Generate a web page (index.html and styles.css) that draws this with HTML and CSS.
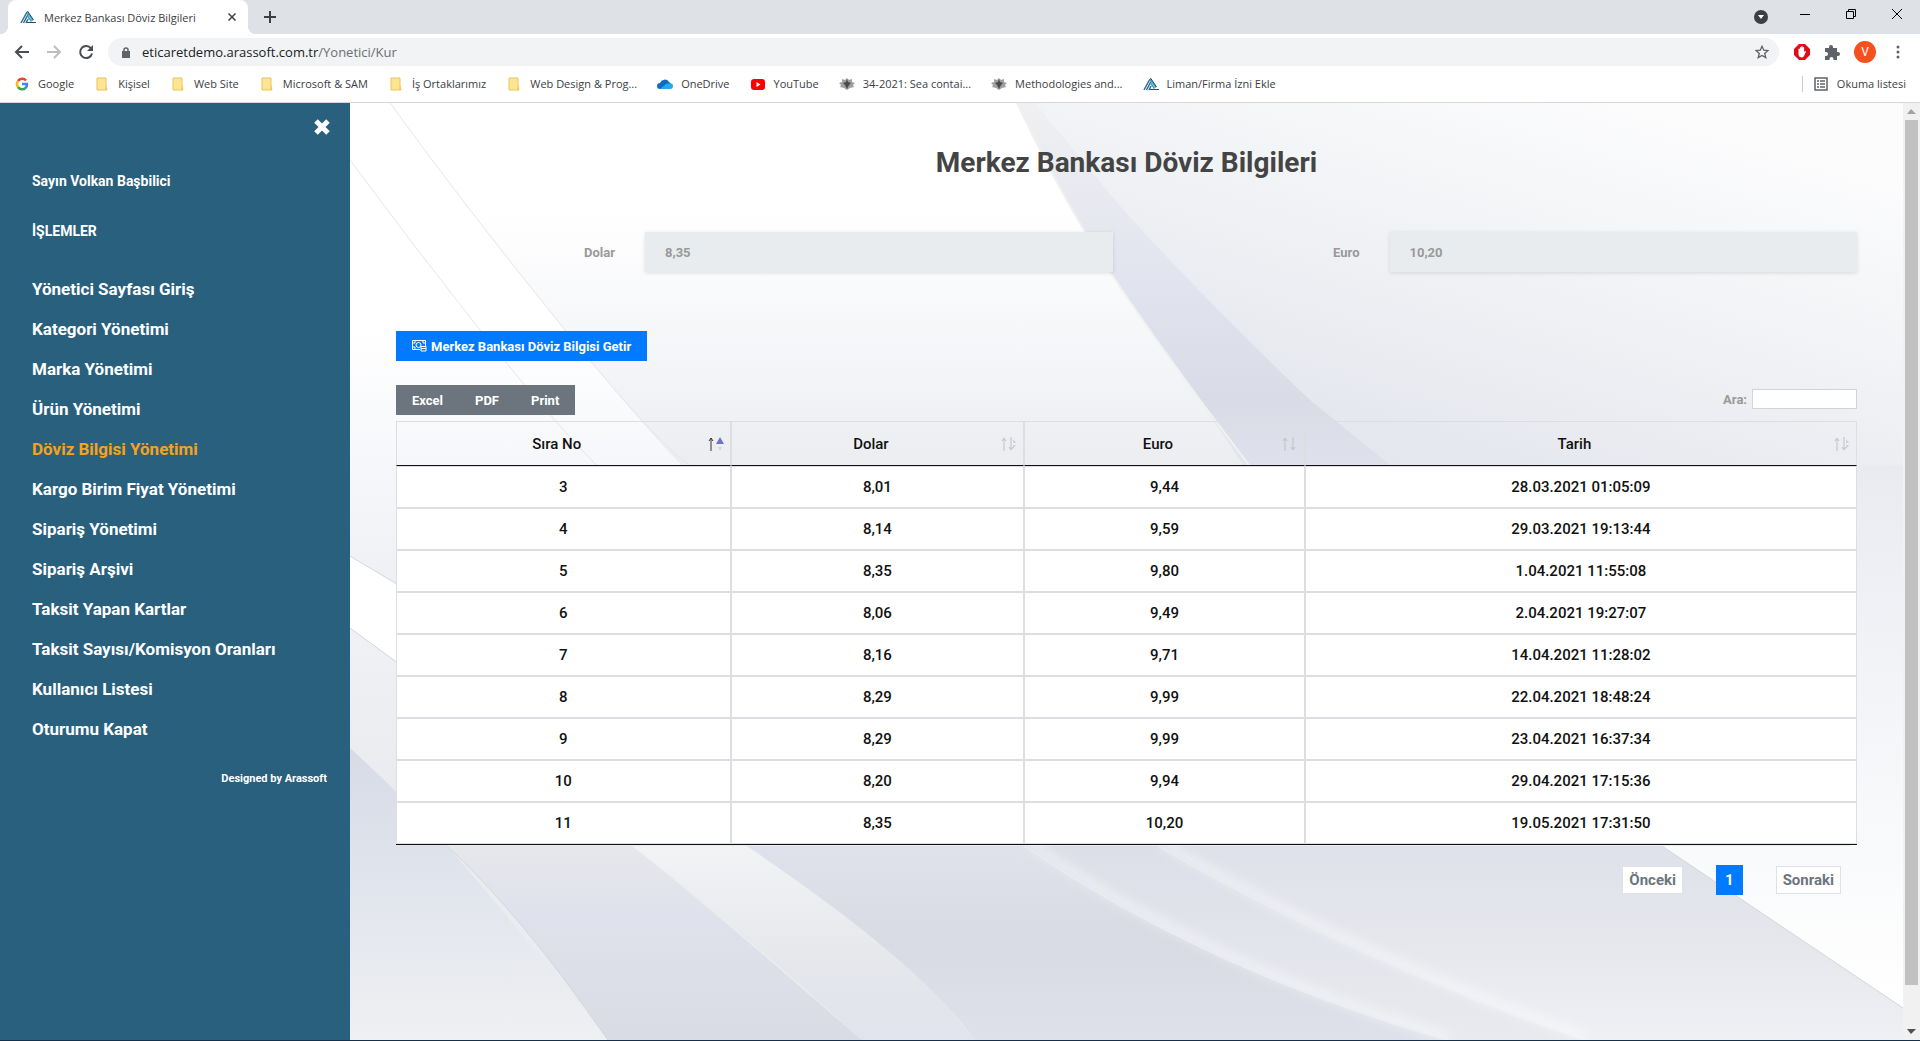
FILE: index.html
```html
<!DOCTYPE html>
<html lang="tr">
<head>
    <meta charset="UTF-8">
    <meta name="viewport" content="width=device-width, initial-scale=1.0">
    <title>Merkez Bankası Döviz Bilgileri</title>
    <link rel="stylesheet" href="styles.css">
</head>
<body>
    <!-- Shared icons -->
    <svg class="sprite" aria-hidden="true">
        <symbol id="logo" viewBox="0 0 16 16">
            <path d="M1 14L7 3M3.500 14L8 5.500M6 14l2-4" stroke="#2c6d94" stroke-width="1.500" fill="none"/>
            <path d="M7 3l6 8.500M7.500 7l4 5.500" stroke="#48a0bd" stroke-width="1.500" fill="none"/>
            <path d="M7.500 2l6 9M7 13.500h9" stroke="#1f4e72" fill="none"/>
        </symbol>
        <symbol id="folder" viewBox="0 0 16 16">
            <path d="M3 2h9v8l1 4H3z" fill="#ffe592" stroke="#e8c55c"/>
            <path d="M11 14l1-5 1 5z" fill="#f1ca4f"/>
        </symbol>
        <symbol id="leaf" viewBox="0 0 16 16">
            <path d="M8 2l2 2 3-1v3l3 1-2 2 1 2-4 1-3 2-3-2-4-1 1-2-2-2 3-1V3l3 1z" fill="#a0a0a0"/>
            <path d="M8 3l1 3 3 1-2 2-2 4-2-4-2-2 3-1z" fill="#4a4a4a"/>
        </symbol>
        <symbol id="sort" viewBox="0 0 18 16">
            <path d="M4 15V2M2 5l2-3 2 3M12 1v13M10 11l2 3 2-3" fill="none" stroke="#bfc1c8"/>
        </symbol>
        <symbol id="sort2" viewBox="0 0 18 16">
            <path d="M4 15V2M2 5l2-3 2 3M11 1v13M9 11l2 3 2-3" fill="none" stroke="#bfc1c8"/>
            <path d="M13 3l3 4h-3zM13 9h3l-3 4z" fill="#cfd1d6"/>
        </symbol>
    </svg>

    <header class="browser">
        <div class="tab-strip">
            <div class="tab">
                <svg class="icon"><use href="#logo"/></svg>
                <span class="tab-title">Merkez Bankası Döviz Bilgileri</span>
                <button class="plain" aria-label="Sekmeyi kapat">
                    <svg width="8" height="8"><path d="M.5.5l7 7M7.500.5l-7 7" stroke="#3c4043" stroke-width="1.500"/></svg>
                </button>
            </div>
            <button class="plain new-tab" aria-label="Yeni sekme">
                <svg width="12" height="12"><path d="M6 0v12M0 6h12" stroke="#3c4043" stroke-width="2"/></svg>
            </button>
            <div class="window-controls">
                <button class="plain search-tabs" aria-label="Sekme ara">
                    <svg width="14" height="14"><circle cx="7" cy="7" r="7" fill="#3c4043"/><path d="M4 5h6l-3 4z" fill="#fff"/></svg>
                </button>
                <button class="plain" aria-label="Küçült">
                    <svg width="10" height="10"><path d="M0 5.500h10" stroke="#000"/></svg>
                </button>
                <button class="plain" aria-label="Geri yükle">
                    <svg width="10" height="10"><path d="M.5 2.500h7v7h-7zM2.500 2V.5h7v7H8" fill="none" stroke="#000"/></svg>
                </button>
                <button class="plain" aria-label="Kapat">
                    <svg width="10" height="10"><path d="M0 0l10 10M10 0L0 10" stroke="#000"/></svg>
                </button>
            </div>
        </div>

        <div class="toolbar">
            <button class="plain" aria-label="Geri">
                <svg width="16" height="16"><path d="M15 8H2M8 2L2 8l6 6" fill="none" stroke="#4a4d51" stroke-width="2"/></svg>
            </button>
            <button class="plain" aria-label="İleri">
                <svg width="16" height="16"><path d="M1 8h13M8 2l6 6-6 6" fill="none" stroke="#bcbec1" stroke-width="2"/></svg>
            </button>
            <button class="plain" aria-label="Yenile">
                <svg width="16" height="16"><path d="M13 4.500A6 6 0 1 0 14 9.500" fill="none" stroke="#4a4d51" stroke-width="2"/><path d="M15 1v6H9z" fill="#4a4d51"/></svg>
            </button>
            <div class="address">
                <svg width="8" height="11"><path d="M0 4h8v7H0z" fill="#5f6368"/><path d="M2 4.500V3a2 2 0 0 1 4 0v1.500" fill="none" stroke="#5f6368" stroke-width="1.500"/></svg>
                <span class="url">eticaretdemo.arassoft.com.tr<span class="path">/Yonetici/Kur</span></span>
                <svg width="14" height="14" viewBox="0 0 16 16"><path d="M8 1.500l2 4.500 4.800.4-3.700 3.200 1.200 4.800L8 11.900l-4.300 2.500 1.200-4.800L1.200 6.400 6 6z" fill="none" stroke="#5f6368" stroke-width="1.500"/></svg>
            </div>
            <div class="extensions">
                <svg width="16" height="16"><path d="M5 0h6l5 5v6l-5 5H5l-5-5V5z" fill="#e10c17"/><path d="M4.500 7.500V5q.7-1 1.400 0V3.500q.7-1 1.400 0v-1q.7-1 1.400 0v1q.7-1 1.400 0V8l1-1q1-.2.9.6L10 12q-1 1.500-2.500 1.500Q4.500 13 4.500 10z" fill="#fff"/></svg>
                <svg width="16" height="16"><path d="M1 4h4V3a2 2 0 0 1 4 0v1h4v4h1a2 2 0 0 1 0 4h-1v4H9.500v-1a2 2 0 0 0-4 0v1H1v-4h1a2 2 0 0 0 0-4H1z" fill="#5f6368"/></svg>
                <button class="avatar">V</button>
                <svg width="16" height="16" fill="#5f6368"><circle cx="8" cy="3" r="1.500"/><circle cx="8" cy="8" r="1.500"/><circle cx="8" cy="13" r="1.500"/></svg>
            </div>
        </div>

        <nav class="bookmarks">
            <a href="#"><svg class="icon" viewBox="0 0 16 16" fill="none" stroke-width="2.500"><path d="M12 4.500A5 5 0 0 0 4 5" stroke="#ea4335"/><path d="M4 5a5 5 0 0 0 0 6" stroke="#fbbc05"/><path d="M4 11a5 5 0 0 0 7.500 1" stroke="#34a853"/><path d="M11.500 12A5 5 0 0 0 13 8H8" stroke="#4285f4"/></svg>Google</a>
            <a href="#"><svg class="icon"><use href="#folder"/></svg>Kişisel</a>
            <a href="#"><svg class="icon"><use href="#folder"/></svg>Web Site</a>
            <a href="#"><svg class="icon"><use href="#folder"/></svg>Microsoft &amp; SAM</a>
            <a href="#"><svg class="icon"><use href="#folder"/></svg>İş Ortaklarımız</a>
            <a href="#"><svg class="icon"><use href="#folder"/></svg>Web Design &amp; Prog...</a>
            <a href="#"><svg class="icon" viewBox="0 0 16 16"><path d="M3 13a3 3 0 0 1 0-6 5 5 0 0 1 9-1 4 4 0 0 1 1 7z" fill="#0f6cbd"/><path d="M3 13l6-5q7-2 7 2 0 3-3 3z" fill="#28a8ea"/></svg>OneDrive</a>
            <a href="#"><svg class="icon" viewBox="0 0 16 16"><rect x="1" y="3" width="14" height="11" rx="3" fill="#f00"/><path d="M6.500 6v5l4-2.500z" fill="#fff"/></svg>YouTube</a>
            <a href="#"><svg class="icon"><use href="#leaf"/></svg>34-2021: Sea contai...</a>
            <a href="#"><svg class="icon"><use href="#leaf"/></svg>Methodologies and...</a>
            <a href="#"><svg class="icon"><use href="#logo"/></svg>Liman/Firma İzni Ekle</a>
            <a href="#" class="reading-list"><svg class="icon" viewBox="0 0 16 16" fill="none" stroke="#5f6368" stroke-width="1.500"><path d="M2 2h12v12H2z"/><path d="M4 5h2M7 5h5M4 8h2M7 8h5M4 11h2M7 11h5"/></svg>Okuma listesi</a>
        </nav>
    </header>

    <div class="page">
        <aside class="sidebar">
            <button class="plain close" aria-label="Menüyü kapat">
                <svg width="16" height="16"><path d="M2 2l12 12M14 2L2 14" stroke="#fff" stroke-width="5"/></svg>
            </button>
            <p class="side-text">Sayın Volkan Başbilici</p>
            <p class="side-text">İŞLEMLER</p>
            <ul>
                <li><a href="#">Yönetici Sayfası Giriş</a></li>
                <li><a href="#">Kategori Yönetimi</a></li>
                <li><a href="#">Marka Yönetimi</a></li>
                <li><a href="#">Ürün Yönetimi</a></li>
                <li><a href="#" class="active">Döviz Bilgisi Yönetimi</a></li>
                <li><a href="#">Kargo Birim Fiyat Yönetimi</a></li>
                <li><a href="#">Sipariş Yönetimi</a></li>
                <li><a href="#">Sipariş Arşivi</a></li>
                <li><a href="#">Taksit Yapan Kartlar</a></li>
                <li><a href="#">Taksit Sayısı/Komisyon Oranları</a></li>
                <li><a href="#">Kullanıcı Listesi</a></li>
                <li><a href="#">Oturumu Kapat</a></li>
            </ul>
            <p class="credit">Designed by Arassoft</p>
        </aside>

        <main class="content">
            <!-- Ribbon backdrop -->
            <svg class="backdrop" viewBox="0 0 1553 937" preserveAspectRatio="none" aria-hidden="true">
                <defs>
                    <linearGradient id="base" x1="0" y1="0" x2="0" y2="1"><stop offset="0" stop-color="#fff"/><stop offset=".11" stop-color="#fff"/><stop offset=".28" stop-color="#f4f5f8"/><stop offset=".4" stop-color="#ebecf0"/><stop offset=".7" stop-color="#eaecf0"/></linearGradient>
                    <linearGradient id="left" x1="0" y1="0" x2="0" y2="1"><stop offset="0" stop-color="#fff"/><stop offset=".4" stop-color="#fff"/><stop offset=".65" stop-color="#f6f7fa"/><stop offset="1" stop-color="#ebecf0"/></linearGradient>
                    <linearGradient id="right" x1="0" y1="1" x2=".7" y2="0"><stop offset="0" stop-color="#dfe3ee"/><stop offset=".3" stop-color="#e6e8ef"/><stop offset=".6" stop-color="#eff1f4"/><stop offset="1" stop-color="#fcfcfd"/></linearGradient>
                    <linearGradient id="fold" x1="0" y1="0" x2="0" y2="1"><stop offset="0" stop-color="#f0f0f1"/><stop offset=".45" stop-color="#e2e4ef"/><stop offset=".8" stop-color="#d9dce6"/><stop offset="1" stop-color="#dfe2ec"/></linearGradient>
                    <linearGradient id="margin" x1="0" y1="0" x2="0" y2="1"><stop offset="0" stop-color="#f0f1f5"/><stop offset="1" stop-color="#e9eaee"/></linearGradient>
                    <linearGradient id="b1" x1="0" y1="0" x2="0" y2="1"><stop offset="0" stop-color="#d8dbe6"/><stop offset=".4" stop-color="#dfe3ec"/><stop offset="1" stop-color="#eff0f2"/></linearGradient>
                    <linearGradient id="b2" x1="0" y1="0" x2="0" y2="1"><stop offset="0" stop-color="#e6e7ea"/><stop offset=".35" stop-color="#dfe2ec"/><stop offset="1" stop-color="#d9dce4"/></linearGradient>
                    <linearGradient id="b3" x1="0" y1="0" x2="0" y2="1"><stop offset="0" stop-color="#f1f3f5"/><stop offset=".6" stop-color="#e5e7eb"/><stop offset="1" stop-color="#e1e3ee"/></linearGradient>
                    <linearGradient id="b4" x1="0" y1="0" x2="0" y2="1"><stop offset="0" stop-color="#dfe1ec"/><stop offset=".5" stop-color="#d8dbe3"/><stop offset="1" stop-color="#dee1ea"/></linearGradient>
                    <linearGradient id="b5" x1="0" y1="0" x2="0" y2="1"><stop offset="0" stop-color="#dcdfe9"/><stop offset="1" stop-color="#e9eaee"/></linearGradient>
                    <linearGradient id="b6" x1="0" y1="0" x2="0" y2="1"><stop offset="0" stop-color="#dfe1eb"/><stop offset=".5" stop-color="#e6e7ec"/><stop offset="1" stop-color="#eff0f4"/></linearGradient>
                    <linearGradient id="b7" x1="0" y1="0" x2="0" y2="1"><stop offset="0" stop-color="#e9ebf1"/><stop offset=".6" stop-color="#f7f8fa"/><stop offset="1" stop-color="#fff"/></linearGradient>
                    <filter id="soft"><feGaussianBlur stdDeviation="5"/></filter>
                </defs>
                <path d="M0 0h1553v937H0z" fill="url(#base)"/>
                <path d="M0 0h40Q120 110 215 227T340 370L420 560H0z" fill="url(#left)"/>
                <path d="M0 57Q65 145 130 227T246 362M40 0Q120 110 215 227T340 362" fill="none" stroke="#e6e6e8"/>
                <path d="M667 0Q700 70 735 129T850 297L905 380h648V0z" fill="url(#right)"/>
                <path d="M667 0Q700 70 735 129T850 297L905 370h145L960 297C900 240 800 140 755 85L685 0z" fill="url(#fold)"/>
                <path d="M667 0Q700 70 735 129T850 297L905 370" fill="none" stroke="#f1f1ef" stroke-width="2"/>
                <!-- left margin of the table -->
                <path d="M0 453l60 36v80L0 525z" fill="#fff"/>
                <path d="M0 525l60 44v150H0z" fill="url(#margin)"/>
                <!-- lower ribbons -->
                <path d="M0 645Q50 690 97 743T258 937H0z" fill="url(#b1)"/>
                <path d="M97 743H282Q350 797 440 875L512 937H258Q170 810 97 743z" fill="url(#b2)"/>
                <path d="M282 743H397Q530 835 590 895L625 937H512Q360 800 282 743z" fill="url(#b3)"/>
                <path d="M397 743H675Q850 865 1095 937H625Q570 860 397 743z" fill="url(#b4)"/>
                <path d="M675 743H808Q1010 860 1230 937H1095Q850 865 675 743z" fill="url(#b5)"/>
                <path d="M808 743H1312L1553 905V937H1230Q1010 860 808 743z" fill="url(#b6)"/>
                <path d="M1500 362h53V905L1312 743h188z" fill="url(#b7)"/>
                <path d="M680 741Q853 861 1100 935M813 741Q1013 856 1235 933" fill="none" stroke="#fff" stroke-width="10" opacity=".4" filter="url(#soft)"/>
                <path d="M675 743Q850 865 1095 937M808 743Q1010 860 1230 937" fill="none" stroke="#eceef1"/>
                <path d="M97 743Q170 810 258 937M0 525l60 44M0 453l60 36M1312 743l241 162" fill="none" stroke="#d3d6dc"/>
            </svg>

            <h1>Merkez Bankası Döviz Bilgileri</h1>

            <form class="rates">
                <div class="field">
                    <label for="dolar">Dolar</label>
                    <input type="text" id="dolar" value="8,35" readonly>
                </div>
                <div class="field">
                    <label for="euro">Euro</label>
                    <input type="text" id="euro" value="10,20" readonly>
                </div>
            </form>

            <button class="btn btn-primary">
                <svg width="15" height="12" fill="none" stroke="#fff"><path d="M8 9.500H.5v-9h13V6M2 4V2h2M10 2h2v2M2 6v2h2"/><circle cx="6.500" cy="5" r="2.500"/><path d="M9 6.500h5v4.500H9zM9 8.500h5"/></svg>
                Merkez Bankası Döviz Bilgisi Getir
            </button>

            <div class="table-tools">
                <div class="btn-group">
                    <button class="btn">Excel</button>
                    <button class="btn">PDF</button>
                    <button class="btn">Print</button>
                </div>
                <div class="search">
                    <label for="ara">Ara:</label>
                    <input type="search" id="ara">
                </div>
            </div>

            <table>
                <thead>
                    <tr>
                        <th class="col-no"><div class="th"><span>Sıra No</span><svg width="18" height="16"><path d="M4 15V2M2 5l2-3 2 3" fill="none" stroke="#333"/><path d="M9 8l4-7 4 7z" fill="#6f73cf"/><path d="M11 11h4l-2 4z" fill="#d3d4dc"/></svg></div></th>
                        <th class="col-dolar"><div class="th"><span>Dolar</span><svg width="18" height="16"><use href="#sort2"/></svg></div></th>
                        <th class="col-euro"><div class="th"><span>Euro</span><svg width="18" height="16"><use href="#sort"/></svg></div></th>
                        <th><div class="th"><span>Tarih</span><svg width="18" height="16"><use href="#sort2"/></svg></div></th>
                    </tr>
                </thead>
                <tbody>
                    <tr><td>3</td><td>8,01</td><td>9,44</td><td>28.03.2021 01:05:09</td></tr>
                    <tr><td>4</td><td>8,14</td><td>9,59</td><td>29.03.2021 19:13:44</td></tr>
                    <tr><td>5</td><td>8,35</td><td>9,80</td><td>1.04.2021 11:55:08</td></tr>
                    <tr><td>6</td><td>8,06</td><td>9,49</td><td>2.04.2021 19:27:07</td></tr>
                    <tr><td>7</td><td>8,16</td><td>9,71</td><td>14.04.2021 11:28:02</td></tr>
                    <tr><td>8</td><td>8,29</td><td>9,99</td><td>22.04.2021 18:48:24</td></tr>
                    <tr><td>9</td><td>8,29</td><td>9,99</td><td>23.04.2021 16:37:34</td></tr>
                    <tr><td>10</td><td>8,20</td><td>9,94</td><td>29.04.2021 17:15:36</td></tr>
                    <tr><td>11</td><td>8,35</td><td>10,20</td><td>19.05.2021 17:31:50</td></tr>
                </tbody>
            </table>

            <nav class="pagination">
                <a href="#">Önceki</a>
                <a href="#" class="current">1</a>
                <a href="#">Sonraki</a>
            </nav>
        </main>

        <div class="scrollbar">
            <svg width="9" height="5"><path d="M0 5l4-5 5 5z" fill="#a3a3a3"/></svg>
            <div class="thumb"></div>
            <svg width="9" height="5"><path d="M0 0h9L4 5z" fill="#505050"/></svg>
        </div>
    </div>
</body>
</html>
```

FILE: styles.css
```css
* {
    box-sizing: border-box;
}
body {
    margin: 0;
    height: 100vh;
    display: flex;
    flex-direction: column;
    overflow: hidden;
    font-family: Roboto, "Open Sans", sans-serif;
    font-weight: 700;
}
a {
    color: inherit;
    text-decoration: none;
}
svg {
    display: block;
    flex: none;
}
.sprite {
    position: absolute;
    width: 0;
    height: 0;
}
.icon {
    width: 16px;
    height: 16px;
}
.plain {
    padding: 0;
    border: none;
    background: none;
}

/* Browser frame */
.browser {
    font-family: "Open Sans", "Noto Sans", sans-serif;
    font-size: 12px;
    font-weight: 400;
    color: #3c4043;
    border-bottom: 1px solid #d5d8db;
}
.tab-strip {
    display: flex;
    align-items: center;
    height: 34px;
    padding-left: 8px;
    background-color: #dee1e6;
}
.tab {
    position: relative;
    display: flex;
    align-items: center;
    gap: 8px;
    width: 240px;
    height: 34px;
    padding: 0 12px;
    border-radius: 8px 8px 0 0;
    background-color: #fff;
}
.tab::before, .tab::after {
    content: "";
    position: absolute;
    bottom: 0;
    width: 8px;
    height: 8px;
}
.tab::before {
    left: -8px;
    background: radial-gradient(circle at 0 0, #dee1e6 8px, #fff 8px);
}
.tab::after {
    right: -8px;
    background: radial-gradient(circle at 100% 0, #dee1e6 8px, #fff 8px);
}
.tab-title {
    flex: 1;
    font-size: 11px;
    white-space: nowrap;
}
.new-tab {
    margin-left: 16px;
}
.window-controls {
    display: flex;
    align-items: center;
    gap: 36px;
    height: 28px;
    margin: 0 0 6px auto;
    padding-right: 18px;
}
.search-tabs {
    margin: 6px -4px 0 0;
}
.toolbar {
    display: flex;
    align-items: center;
    gap: 16px;
    height: 36px;
    padding: 0 14px;
}
.address {
    flex: 1;
    display: flex;
    align-items: center;
    gap: 12px;
    height: 28px;
    margin: 0 -1px 0 -2px;
    padding: 0 10px 0 14px;
    border-radius: 14px;
    background-color: #f1f3f4;
}
.url {
    flex: 1;
    font-size: 13px;
    color: #202124;
}
.path {
    color: #6b6f73;
}
.extensions {
    display: flex;
    align-items: center;
    gap: 14px;
}
.avatar {
    width: 22px;
    height: 22px;
    padding: 0;
    border: none;
    border-radius: 50%;
    background-color: #f4511e;
    color: #fff;
    font: 12px Roboto, sans-serif;
}
.bookmarks {
    display: flex;
    align-items: center;
    gap: 20px;
    height: 32px;
    padding: 0 14px 5px;
    font-size: 11px;
}
.bookmarks a {
    display: flex;
    align-items: center;
    gap: 8px;
    white-space: nowrap;
}
.bookmarks .reading-list {
    margin-left: auto;
    padding-left: 10px;
    border-left: 1px solid #c8cacd;
}

/* Page */
.page {
    flex: 1;
    display: flex;
    min-height: 0;
    border-bottom: 1px solid #14304a;
}
.sidebar {
    flex: none;
    width: 350px;
    padding: 16px 20px 0 32px;
    background-color: #28607d;
    color: #fff;
    font-size: 14px;
}
.close {
    display: block;
    margin: 0 0 36px auto;
}
.side-text {
    margin: 0 0 30px;
    line-height: 20px;
}
.sidebar ul {
    margin: -2px 0 0;
    padding: 0;
    list-style: none;
    font-size: 17px;
    line-height: 40px;
}
.sidebar .active {
    color: #f5a31c;
}
.credit {
    margin: 20px 0 0;
    padding-right: 3px;
    font-size: 11px;
    line-height: 20px;
    text-align: right;
}
.content {
    position: relative;
    z-index: 0;
    flex: 1;
    padding: 40px 46px 0;
}
.backdrop {
    position: absolute;
    inset: 0;
    z-index: -1;
    width: 100%;
    height: 100%;
}
h1 {
    margin: 0 0 49px;
    font-size: 28px;
    line-height: 40px;
    text-align: center;
    color: #444;
}
.rates {
    display: grid;
    grid-template-columns: 1fr 1fr;
    gap: 28px;
    margin-bottom: 59px;
    font-size: 13px;
    color: #999;
}
.field {
    display: flex;
    align-items: center;
    gap: 30px;
}
.field label {
    width: 219px;
    text-align: right;
}
.field input {
    flex: 1;
    min-width: 0;
    height: 40px;
    padding: 0 20px;
    border: none;
    background-color: #e9ecef;
    box-shadow: 0 1px 4px rgba(0, 0, 0, 0.12);
    color: #999;
    font: inherit;
}
.btn {
    display: flex;
    align-items: center;
    gap: 4px;
    height: 30px;
    padding: 0 16px;
    border: none;
    background-color: #6c757d;
    color: #fff;
    font: inherit;
    font-size: 13px;
}
.btn-primary {
    background-color: #007bff;
}
.table-tools {
    display: flex;
    justify-content: space-between;
    margin: 24px 0 6px;
}
.btn-group {
    display: flex;
}
.search {
    display: flex;
    align-items: center;
    gap: 5px;
    height: 28px;
    font-size: 13px;
    color: #999;
}
.search input {
    width: 105px;
    height: 20px;
    border: 1px solid #d0d3d8;
    background-color: #fff;
}
table {
    width: 100%;
    table-layout: fixed;
    border-collapse: separate;
    border-spacing: 0;
    border-bottom: 1px solid #111;
    font-size: 15px;
    font-weight: 500;
    text-align: center;
    color: #111;
}
th, td {
    padding: 0;
    border: 1px solid #dcdee2;
}
th {
    height: 45px;
    border-bottom-color: #111;
    font-weight: 500;
}
td {
    height: 42px;
    background-color: #fff;
}
.th {
    display: flex;
    align-items: center;
    padding: 0 5px 0 10px;
}
.th span {
    flex: 1;
}
.col-no {
    width: 22.9%;
}
.col-dolar {
    width: 20.1%;
}
.col-euro {
    width: 19.2%;
}
.pagination {
    display: flex;
    align-items: center;
    justify-content: flex-end;
    gap: 33px;
    margin-top: 20px;
    padding-right: 16px;
    font-size: 15px;
    line-height: 26px;
    color: #6c757d;
}
.pagination a {
    padding: 0 6px;
    border: 1px solid #dee2e6;
    background-color: #fff;
}
.pagination .current {
    padding: 1px 8px;
    border-color: #007bff;
    background-color: #007bff;
    color: #fff;
}
.scrollbar {
    display: flex;
    flex-direction: column;
    align-items: center;
    gap: 6px;
    width: 17px;
    padding: 6px 0;
    background-color: #f1f1f1;
}
.thumb {
    width: 13px;
    height: calc(100% - 60px);
    margin-bottom: auto;
    background-color: #c1c1c1;
}
```
